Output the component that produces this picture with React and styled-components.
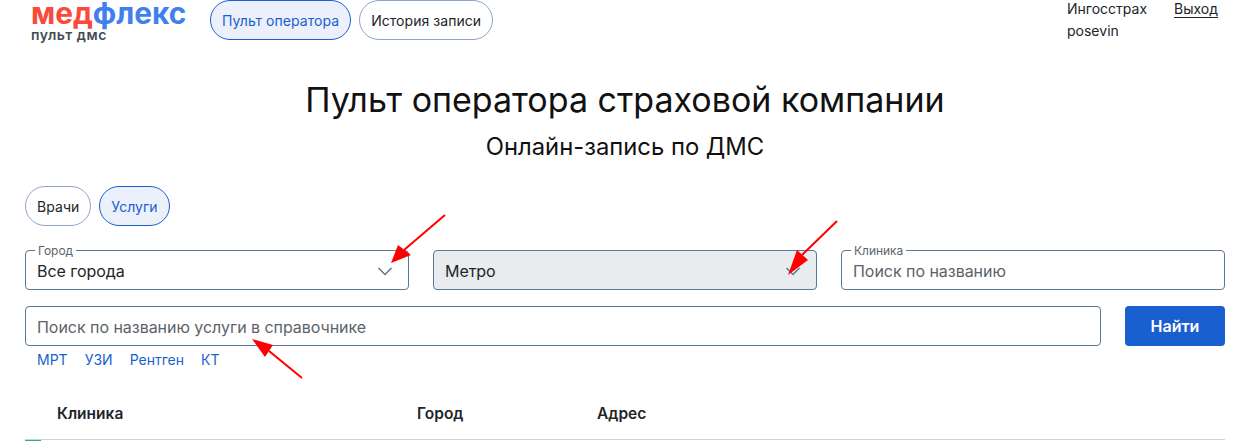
import React from "react";
import styled, { createGlobalStyle } from "styled-components";

const GlobalStyle = createGlobalStyle`
    html, body {
        margin: 0;
        padding: 0;
        background: #fff;
        overflow: hidden;
    }
    body {
        font-family: Inter, "Noto Sans", sans-serif;
        color: #212529;
    }
`;

const Page = styled.div`
    position: relative;
    width: 1253px;
    height: 441px;
    padding: 0 28px 0 25px;
    box-sizing: border-box;
    overflow: hidden;
`;

const Header = styled.header`
    display: flex;
    align-items: flex-start;
    height: 40px;
`;

const Logo = styled.div`
    width: 185px;
    padding-left: 6px;
    box-sizing: border-box;
`;

const LogoName = styled.div`
    font-size: 29.8px;
    font-weight: 700;
    line-height: 26px;
    color: #3f7fee;
    span {
        color: #fa4a3c;
    }
`;

const LogoSub = styled.div`
    margin-top: 1px;
    font-size: 14px;
    font-weight: 600;
    line-height: 16px;
    letter-spacing: 0.55px;
    color: #454b54;
`;

const Pills = styled.div`
    display: flex;
    gap: 8px;
`;

const Pill = styled.button`
    height: 40px;
    padding: 0 11px;
    border-radius: 20px;
    box-sizing: border-box;
    font-family: inherit;
    font-size: 14px;
    letter-spacing: 0.05px;
    border: 1px solid ${(p) => (p.$active ? "#1a5fd0" : "#8fa6c4")};
    background: ${(p) => (p.$active ? "#ebf0fb" : "#fff")};
    color: ${(p) => (p.$active ? "#1a5fd0" : "#212529")};
`;

const User = styled.div`
    margin-left: auto;
    margin-right: 7px;
    display: grid;
    grid-template-columns: 107px auto;
    font-size: 14px;
    line-height: 22px;
    margin-top: -2px;
`;

const Logout = styled.a`
    color: #212529;
    text-decoration: underline;
    text-underline-offset: 3px;
`;

const Title = styled.h1`
    margin: 38px 0 0;
    text-align: center;
    font-size: 34px;
    font-weight: 400;
    line-height: 44px;
    color: #111;
`;

const Subtitle = styled.h2`
    margin: 9px 0 0;
    text-align: center;
    font-size: 23.8px;
    font-weight: 400;
    line-height: 32px;
    color: #111;
`;

const TabPills = styled(Pills)`
    margin-top: 23px;
`;

const Fields = styled.div`
    display: grid;
    grid-template-columns: repeat(3, 1fr);
    gap: 24px;
    margin-top: 24px;
`;

const Field = styled.div`
    position: relative;
    display: flex;
    align-items: center;
    justify-content: space-between;
    height: 40px;
    padding: 1px 15px 0 11px;
    box-sizing: border-box;
    border: 1px solid #5b7896;
    border-radius: 4px;
    font-size: 16px;
    line-height: 24px;
    letter-spacing: -0.04px;
    background: ${(p) => (p.$disabled ? "#e9ecef" : "#fff")};
    color: ${(p) => (p.$placeholder ? "#5c636a" : "#212529")};
`;

const FieldLabel = styled.label`
    position: absolute;
    left: 9px;
    top: -6px;
    padding: 0 3px;
    background: #fff;
    font-size: 12px;
    line-height: 12px;
    color: #5c636a;
`;

const Chevron = styled.svg`
    width: 16px;
    height: 10px;
    fill: none;
    stroke: #5b7896;
    stroke-width: 1.5;
`;

const SearchRow = styled.div`
    display: grid;
    grid-template-columns: 1fr 100px;
    gap: 24px;
    margin-top: 16px;
`;

const FindButton = styled.button`
    height: 40px;
    border: 0;
    border-radius: 4px;
    background: #1a5fd0;
    color: #fff;
    font-family: inherit;
    font-size: 16px;
    font-weight: 600;
`;

const Tags = styled.div`
    display: flex;
    gap: 17px;
    padding-left: 12px;
    margin-top: 5px;
    font-size: 14px;
    line-height: 18px;
`;

const Tag = styled.a`
    color: #1a5fd0;
`;

const TableHead = styled.div`
    position: relative;
    display: grid;
    grid-template-columns: 360px 180px 1fr;
    padding: 0 0 13px 32px;
    margin-top: 33px;
    border-bottom: 1px solid #ced4da;
    font-size: 15.5px;
    font-weight: 600;
    line-height: 24px;
    color: #212529;
`;

const Accent = styled.div`
    position: absolute;
    left: 0;
    bottom: -2px;
    width: 16px;
    height: 1px;
    background: #1cb58c;
`;

const Arrows = styled.svg`
    position: absolute;
    left: 0;
    top: 0;
    width: 1253px;
    height: 441px;
    pointer-events: none;
`;

// red annotation arrows: line from tail, filled head at the tip
const annotations = [
    { line: "445,215 404,250", head: "391,263 398,245 411,255" },
    { line: "837,221 802,255", head: "788,275 797,250 808,260" },
    { line: "302,378 269,351", head: "252,339 273,345 265,357" },
];

const ChevronDown = () => (
    <Chevron viewBox="0 0 16 10">
        <path d="M1.5 2 L8 8.5 L14.5 2" />
    </Chevron>
);

const App = () => (
    <Page>
        <GlobalStyle />
        <Header>
            <Logo>
                <LogoName>
                    <span>мед</span>флекс
                </LogoName>
                <LogoSub>пульт дмс</LogoSub>
            </Logo>
            <Pills>
                <Pill $active>Пульт оператора</Pill>
                <Pill>История записи</Pill>
            </Pills>
            <User>
                <span>Ингосстрах</span>
                <Logout>Выход</Logout>
                <span>posevin</span>
            </User>
        </Header>
        <Title>Пульт оператора страховой компании</Title>
        <Subtitle>Онлайн-запись по ДМС</Subtitle>
        <TabPills>
            <Pill>Врачи</Pill>
            <Pill $active>Услуги</Pill>
        </TabPills>
        <Fields>
            <Field>
                <FieldLabel>Город</FieldLabel>
                <span>Все города</span>
                <ChevronDown />
            </Field>
            <Field $disabled>
                <span>Метро</span>
                <ChevronDown />
            </Field>
            <Field $placeholder>
                <FieldLabel>Клиника</FieldLabel>
                <span>Поиск по названию</span>
            </Field>
        </Fields>
        <SearchRow>
            <Field $placeholder>
                <span>Поиск по названию услуги в справочнике</span>
            </Field>
            <FindButton>Найти</FindButton>
        </SearchRow>
        <Tags>
            {["МРТ", "УЗИ", "Рентген", "КТ"].map((tag) => (
                <Tag key={tag}>{tag}</Tag>
            ))}
        </Tags>
        <TableHead>
            <span>Клиника</span>
            <span>Город</span>
            <span>Адрес</span>
            <Accent />
        </TableHead>
        <Arrows viewBox="0 0 1253 441">
            {annotations.map(({ line, head }) => (
                <g key={line}>
                    <polyline points={line} stroke="#f00" strokeWidth="2" fill="none" />
                    <polygon points={head} fill="#f00" />
                </g>
            ))}
        </Arrows>
    </Page>
);

export default App;
